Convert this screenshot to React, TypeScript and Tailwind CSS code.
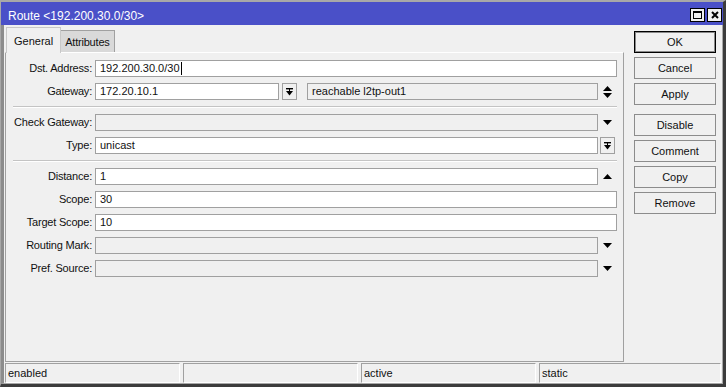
import React from "react";

const DropBar = () => (
  <svg width="7" height="8" viewBox="0 0 7 8" className="block">
    <rect x="0" y="0" width="7" height="1.4" fill="#000" />
    <rect x="3" y="1" width="1" height="2" fill="#000" />
    <polygon points="0,3 7,3 3.5,7.5" fill="#000" />
  </svg>
);

const DownTri = () => (
  <svg width="9" height="5" viewBox="0 0 9 5" className="block">
    <polygon points="0,0 9,0 4.5,5" fill="#000" />
  </svg>
);

const UpTri = () => (
  <svg width="9" height="5" viewBox="0 0 9 5" className="block">
    <polygon points="0,5 9,5 4.5,0" fill="#000" />
  </svg>
);

const UpDown = () => (
  <svg width="9" height="12" viewBox="0 0 9 12" className="block">
    <polygon points="0,5 9,5 4.5,0" fill="#000" />
    <polygon points="0,7 9,7 4.5,12" fill="#000" />
  </svg>
);

function Row({ label, children }: { label: string; children: React.ReactNode }) {
  return (
    <div className="flex items-center h-[17px] pr-[6px]">
      <div className="w-[86px] text-right whitespace-nowrap leading-[17px] text-[#111] tracking-[-0.2px]">{label}:</div>
      <div className="ml-[3px] flex flex-1 items-center h-[17px]">{children}</div>
    </div>
  );
}

function Field({ value, gray, cursor }: { value?: string; gray?: boolean; cursor?: boolean }) {
  return (
    <div
      className={
        "h-[17px] flex-1 border border-[#a0a0a0] pl-[4px] leading-[15px] whitespace-nowrap text-[#111] flex items-center " +
        (gray ? "bg-[#f0f0f0]" : "bg-white")
      }
    >
      <span>{value}</span>
      {cursor && <span className="w-px h-[13px] bg-black ml-px" />}
    </div>
  );
}

const IconCell = ({ children }: { children: React.ReactNode }) => (
  <div className="w-[19px] h-[17px] flex items-center justify-center">{children}</div>
);

const SmallBtn = () => (
  <div className="w-[15px] h-[17px] border border-[#a0a0a0] bg-[#f0f0f0] flex items-center justify-center">
    <DropBar />
  </div>
);

const Sep = () => (
  <div className="ml-[7px] mr-[6px] h-[2px] border-t border-[#c4c4c4] border-b border-b-white" />
);

function Btn({ label, def, extra }: { label: string; def?: boolean; extra?: string }) {
  return (
    <div
      className={
        "h-[22px] w-[82px] flex items-center justify-center bg-[#f0f0f0] text-[#111] " +
        (def
          ? "border border-black shadow-[inset_0_0_0_1px_#8a8a8a] "
          : "border border-[#8c8c8c] ") +
        (extra ?? "")
      }
    >
      {label}
    </div>
  );
}

function Cell({ text, cls }: { text?: string; cls: string }) {
  return (
    <div
      className={
        "h-[20px] border-t border-l border-[#a0a0a0] border-b border-r border-b-white border-r-white pl-[2px] leading-[18px] text-[#111] " +
        cls
      }
    >
      {text}
    </div>
  );
}

export default function App() {
  return (
    <div className="w-[727px] h-[390px] bg-white overflow-hidden relative font-['Liberation_Sans',Arial,sans-serif] text-[11px]">
      <div className="w-[726px] h-[387px] bg-[#f0f0f0] flex flex-col border-t-2 border-l border-r-[3px] border-b-[3px] border-t-[#a8a8a8] border-l-[#a8a8a8] border-r-[#3c3c3c] border-b-[#3c3c3c]">
        {/* Title bar */}
        <div className="h-[23px] bg-[#4a50c8] flex items-start justify-between shrink-0">
          <div className="mt-[7px] ml-[7px] leading-[14px] text-[12px] text-white whitespace-nowrap">
            Route &lt;192.200.30.0/30&gt;
          </div>
          <div className="flex gap-[2px] mt-[6px] mr-[1px]">
            <div className="w-[15px] h-[14px] bg-[#f0f0f0] border border-black flex items-center justify-center">
              <svg width="9" height="8" viewBox="0 0 9 8" className="block">
                <rect x="0.5" y="0.5" width="8" height="7" fill="none" stroke="#000" strokeWidth="1" />
                <rect x="0" y="0" width="9" height="2" fill="#000" />
              </svg>
            </div>
            <div className="w-[15px] h-[14px] bg-[#f0f0f0] border border-black flex items-center justify-center">
              <svg width="8" height="8" viewBox="0 0 8 8" className="block">
                <path d="M1 1 L7 7 M7 1 L1 7" stroke="#000" strokeWidth="2" />
              </svg>
            </div>
          </div>
        </div>

        {/* Body */}
        <div className="flex-1 flex flex-col border-l-[3px] border-l-[#8c8c8c] border-r border-r-[#a8a8a8] border-b border-b-[#a8a8a8] pl-px pr-px">
          <div className="flex">
            {/* Left column */}
            <div className="w-[619px] flex flex-col">
              <div className="h-[27px] flex items-end pl-px">
                <div className="h-[26px] -mb-px relative z-10 bg-[#f0f0f0] border-t border-l border-r border-[#c8c8c8] px-[7px] flex items-center leading-[14px] text-[#111]">
                  General
                </div>
                <div className="h-[22px] bg-[#d9d9d9] border-t border-r border-[#a0a0a0] px-[4px] pt-px flex items-center leading-[14px] text-[#111] tracking-[-0.2px]">
                  Attributes
                </div>
              </div>
              <div className="h-[310px] border border-[#a0a0a0] border-t-white pt-[7px] flex flex-col gap-[6px]">
                <Row label="Dst. Address">
                  <Field value="192.200.30.0/30" cursor />
                </Row>
                <Row label="Gateway">
                  <div className="w-[184px] shrink-0 flex">
                    <Field value="172.20.10.1" />
                  </div>
                  <div className="ml-[3px]">
                    <SmallBtn />
                  </div>
                  <div className="ml-[10px] flex flex-1">
                    <Field value="reachable l2tp-out1" gray />
                  </div>
                  <IconCell>
                    <UpDown />
                  </IconCell>
                </Row>
                <Sep />
                <Row label="Check Gateway">
                  <Field gray />
                  <IconCell>
                    <DownTri />
                  </IconCell>
                </Row>
                <Row label="Type">
                  <Field value="unicast" />
                  <div className="w-[19px] pl-[2px]">
                    <SmallBtn />
                  </div>
                </Row>
                <Sep />
                <Row label="Distance">
                  <Field value="1" />
                  <IconCell>
                    <UpTri />
                  </IconCell>
                </Row>
                <Row label="Scope">
                  <Field value="30" />
                </Row>
                <Row label="Target Scope">
                  <Field value="10" />
                </Row>
                <Row label="Routing Mark">
                  <Field gray />
                  <IconCell>
                    <DownTri />
                  </IconCell>
                </Row>
                <Row label="Pref. Source">
                  <Field gray />
                  <IconCell>
                    <DownTri />
                  </IconCell>
                </Row>
              </div>
            </div>

            {/* Right buttons */}
            <div className="ml-[10px] w-[82px] pt-[6px] flex flex-col gap-[4px]">
              <Btn label="OK" def />
              <Btn label="Cancel" />
              <Btn label="Apply" />
              <Btn label="Disable" extra="mt-[5px]" />
              <Btn label="Comment" />
              <Btn label="Copy" />
              <Btn label="Remove" />
            </div>
          </div>

          {/* Status bar */}
          <div className="mt-px flex gap-[3px]">
            <Cell text="enabled" cls="w-[175px]" />
            <Cell cls="w-[175px]" />
            <Cell text="active" cls="w-[175px]" />
            <Cell text="static" cls="flex-1" />
          </div>
        </div>
      </div>
    </div>
  );
}
